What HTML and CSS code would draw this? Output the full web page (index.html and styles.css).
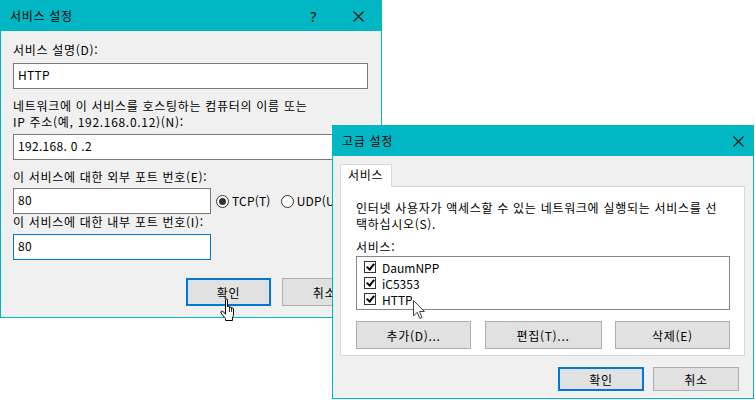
FILE: index.html
```html
<!DOCTYPE html>
<html lang="ko">
<head>
  <meta charset="UTF-8" />
  <meta name="viewport" content="width=device-width, initial-scale=1.0" />
  <title>서비스 설정</title>
  <link rel="stylesheet" href="styles.css">
</head>
<body>
  <div class="window service-window">
    <div class="titlebar">
      <span class="title">서비스 설정</span>
      <span class="help">?</span>
      <svg class="close" width="11" height="11" viewBox="0 0 11 11"><path d="M0.5 0.5 L10.5 10.5 M10.5 0.5 L0.5 10.5" stroke="#111" stroke-width="1.1"/></svg>
    </div>
    <div class="content">
      <div class="label first">서비스 설명(D):</div>
      <div class="input wide">HTTP</div>

      <div class="label gap">네트워크에 이 서비스를 호스팅하는 컴퓨터의 이름 또는<br>IP 주소(예, 192.168.0.12)(N):</div>
      <div class="input wide">192.168. 0 .2</div>

      <div class="label gap">이 서비스에 대한 외부 포트 번호(E):</div>
      <div class="port-row">
        <div class="input short">80</div>
        <div class="radio checked"></div><span class="radio-text">TCP(T)</span>
        <div class="radio udp"></div><span class="radio-text">UDP(U)</span>
      </div>

      <div class="label">이 서비스에 대한 내부 포트 번호(I):</div>
      <div class="input short focused">80</div>

      <div class="buttons">
        <div class="btn default">확인</div>
        <div class="btn">취소</div>
      </div>
    </div>
  </div>

  <div class="window advanced-window">
    <div class="titlebar">
      <span class="title">고급 설정</span>
      <svg class="close" width="11" height="11" viewBox="0 0 11 11"><path d="M0.5 0.5 L10.5 10.5 M10.5 0.5 L0.5 10.5" stroke="#111" stroke-width="1.1"/></svg>
    </div>
    <div class="content">
      <div class="tabs">
        <div class="tab">서비스</div>
      </div>
      <div class="panel">
        <div class="desc">인터넷 사용자가 액세스할 수 있는 네트워크에 실행되는 서비스를 선<br>택하십시오(S).</div>
        <div class="list-label">서비스:</div>
        <div class="listbox">
          <div class="item"><span class="check"></span>DaumNPP</div>
          <div class="item"><span class="check"></span>iC5353</div>
          <div class="item"><span class="check"></span>HTTP</div>
        </div>
        <div class="panel-buttons">
          <div class="btn big">추가(D)...</div>
          <div class="btn big mid">편집(T)...</div>
          <div class="btn big">삭제(E)</div>
        </div>
      </div>
      <div class="buttons bottom">
        <div class="btn default small">확인</div>
        <div class="btn small">취소</div>
      </div>
    </div>
  </div>

  <svg class="cursor hand" width="17" height="24" viewBox="0 0 17 24">
    <path d="M5.5 2 C5.5 0.6 7.5 0.6 7.5 2 V9 C7.5 7.8 9.5 7.8 9.5 9 V10 C9.5 8.8 11.5 8.8 11.5 10 V11 C11.5 9.8 13.5 9.8 13.5 11 V16 C13.5 18 12.5 19 12.5 20 V22.5 H5.5 V20.5 C4.5 19.5 2 16.5 1.2 15 C0.4 13.6 1.6 12.6 2.8 13.4 L5.5 16 Z" fill="#fff" stroke="#000" stroke-width="1"/>
    <path d="M9.5 10 V14 M11.5 11 V14" stroke="#000" stroke-width="0.8"/>
  </svg>
  <svg class="cursor arrow" width="14" height="21" viewBox="0 0 14 21">
    <path d="M0.5 0.5 V16 L4.2 12.3 L6.8 18.5 L9 17.5 L6.5 11.5 H11.5 Z" fill="#fff" stroke="#444" stroke-width="1"/>
  </svg>
</body>
</html>
```

FILE: styles.css
```css
body {
  margin: 0;
  background: #fff;
  font-family: "Noto Sans CJK KR", "Noto Sans", sans-serif;
  font-size: 12px;
  letter-spacing: 0.7px;
  color: #000;
  position: relative;
  width: 755px;
  height: 400px;
  overflow: hidden;
}

.window {
  position: absolute;
  box-sizing: border-box;
  border: 1px solid #00b4c2;
  background: #f0f0f0;
}

.service-window {
  left: 0;
  top: 0;
  width: 382px;
  height: 318px;
}

.advanced-window {
  left: 332px;
  top: 125px;
  width: 422px;
  height: 274px;
}

.titlebar {
  height: 30px;
  background: #00b7c3;
  display: flex;
  align-items: center;
  padding-left: 9px;
}

.title {
  flex: 1;
  line-height: 16px;
}

.help {
  font-family: "Noto Sans", sans-serif;
  font-size: 14px;
  margin-right: 36px;
}

.close {
  margin-right: 17px;
}

.advanced-window .close {
  margin-right: 9px;
}

.service-window .content {
  padding: 11px 12px 0;
}

.label {
  line-height: 16px;
  white-space: nowrap;
}

.label.gap {
  margin-top: 9px;
}

.input {
  box-sizing: border-box;
  height: 26px;
  border: 1px solid #7a7a7a;
  background: #fff;
  padding-left: 4px;
  line-height: 22px;
  margin-top: 4px;
  letter-spacing: 0.3px;
}

.input.wide {
  width: 355px;
}

.first + .input {
  margin-top: 5px;
}

.input.short {
  width: 198px;
}

.input.focused {
  border-color: #0078d7;
  margin-top: 4px;
}

.port-row {
  display: flex;
  align-items: center;
  margin-top: 3px;
}

.port-row .input {
  margin-top: 0;
}

.radio {
  box-sizing: border-box;
  width: 13px;
  height: 13px;
  border: 1px solid #333;
  border-radius: 50%;
  background: #fff;
  margin: 1px 3px 0 5px;
  position: relative;
}

.radio.checked::after {
  content: "";
  position: absolute;
  left: 2px;
  top: 2px;
  width: 7px;
  height: 7px;
  border-radius: 50%;
  background: #333;
}

.radio.udp {
  margin-left: 10px;
}

.radio-text {
  line-height: 16px;
  letter-spacing: 0.2px;
}

.buttons {
  display: flex;
  gap: 11px;
  margin-top: 18px;
  padding-left: 173px;
}

.btn {
  box-sizing: border-box;
  width: 85px;
  height: 28px;
  border: 1px solid #adadad;
  background: #e1e1e1;
  display: flex;
  align-items: center;
  justify-content: center;
}

.btn.default {
  border: 2px solid #0078d7;
}

.advanced-window .content {
  padding: 8px 8px 0 7px;
}

.tabs {
  display: flex;
  height: 22px;
}

.tab {
  box-sizing: border-box;
  height: 23px;
  width: 52px;
  border: 1px solid #d9d9d9;
  border-bottom: none;
  background: #fff;
  padding: 2px 0 0 7px;
  line-height: 16px;
  position: relative;
  z-index: 1;
}

.panel {
  box-sizing: border-box;
  height: 170px;
  border: 1px solid #d9d9d9;
  background: #fff;
  padding: 13px 14px 0 15px;
}

.desc {
  line-height: 16px;
  white-space: nowrap;
}

.list-label {
  line-height: 16px;
  margin-top: 7px;
}

.listbox {
  box-sizing: border-box;
  height: 54px;
  border: 1px solid #828790;
  padding: 2px 0 0 7px;
  margin-top: 1px;
}

.item {
  height: 16px;
  display: flex;
  align-items: center;
  letter-spacing: 0;
}

.check {
  box-sizing: border-box;
  width: 12px;
  height: 12px;
  border: 1px solid #333;
  margin-right: 6px;
  position: relative;
}

.check::after {
  content: "";
  position: absolute;
  left: 3px;
  top: 0;
  width: 3px;
  height: 6px;
  border: solid #000;
  border-width: 0 2px 2px 0;
  transform: rotate(40deg);
}

.panel-buttons {
  display: flex;
  justify-content: space-between;
  margin-top: 11px;
}

.btn.big {
  width: 115px;
  height: 28px;
}

.btn.big.mid {
  width: 117px;
}

.buttons.bottom {
  justify-content: flex-end;
  padding: 0 6px 0 0;
  margin-top: 11px;
  gap: 9px;
}

.btn.small {
  height: 24px;
  width: 86px;
}

.cursor {
  position: absolute;
}

.hand {
  left: 220px;
  top: 298px;
}

.arrow {
  left: 413px;
  top: 300px;
}
```
